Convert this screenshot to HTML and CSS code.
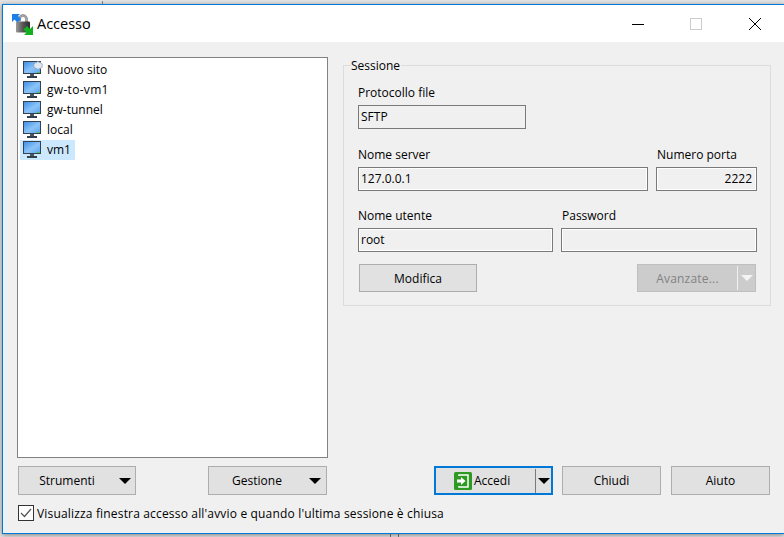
FILE: index.html
```html
<!DOCTYPE html>
<html>
<head>
  <meta charset="utf-8">
  <link rel="stylesheet" href="styles.css">
  <title>Accesso</title>
</head>
<body>
  <svg class="defs" width="0" height="0">
    <defs>
      <linearGradient id="screen" x1="0" y1="0" x2="1" y2="1">
        <stop offset="0" stop-color="#3f8fe8"/>
        <stop offset="0.55" stop-color="#8cc4f8"/>
        <stop offset="1" stop-color="#5aa5ee"/>
      </linearGradient>
      <linearGradient id="lock" x1="0" y1="0" x2="1" y2="0">
        <stop offset="0" stop-color="#9a9a9a"/>
        <stop offset="0.5" stop-color="#555"/>
        <stop offset="1" stop-color="#2c2c2c"/>
      </linearGradient>
      <symbol id="monitor" viewBox="0 0 18 18">
        <rect x="0" y="0" width="18" height="13" fill="#35414d"/>
        <rect x="1" y="1" width="16" height="11" fill="url(#screen)"/>
        <rect x="14" y="11" width="3" height="1" fill="#4fc04f"/>
        <rect x="7" y="13" width="4" height="2" fill="#4a5560"/>
        <rect x="4" y="15" width="10" height="2" fill="#35414d"/>
      </symbol>
    </defs>
  </svg>

  <div class="window">
    <div class="titlebar">
      <svg class="app-icon" width="21" height="21" viewBox="0 0 21 21">
        <path d="M6.500 7V5a4.500 4.500 0 0 1 9 0v3h-2V5a2.500 2.500 0 0 0-5 0v2z" fill="#a8a8a8" stroke="#666" stroke-width="0.500"/>
        <rect x="4" y="7.500" width="14" height="11" rx="1" fill="url(#lock)"/>
        <path d="M0 0h8L6 2l3 3-3.500 3.500-3-3L0 8z" fill="#1a7fe6"/>
        <path d="M21 21h-9l2.500-2.500-3-3 3.500-3.500 3 3 3-3z" fill="#12b01e"/>
      </svg>
      <span class="title">Accesso</span>
      <div class="caption-buttons">
        <svg class="cap" width="12" height="12" viewBox="0 0 12 12"><path d="M0 6.500h12" stroke="#000" fill="none"/></svg>
        <svg class="cap" width="12" height="12" viewBox="0 0 12 12"><rect x="0.500" y="0.500" width="11" height="11" stroke="#ccc" fill="none"/></svg>
        <svg class="cap close-x" width="12" height="12" viewBox="0 0 12 12"><path d="M0 0l12 12M12 0L0 12" stroke="#000" fill="none"/></svg>
      </div>
    </div>

    <div class="content">
      <div class="main">
        <div class="site-list">
          <div class="site">
            <svg class="site-icon new" width="20" height="18" viewBox="0 0 20 18">
              <use href="#monitor" width="18" height="18"/>
              <path d="M15 0l1 1.500 1.500-.5.500 1.500 1.500.5-.5 1.500.5 1.500-1.500.5-.5 1.500-1.500-.5-1 1-1-1-1.500.5-.5-1.500-1.500-.5.500-1.500-.5-1.500 1.500-.5.500-1.500 1.500.5z" fill="#dfe8f2" stroke="#7d96b0" stroke-width="0.600"/>
            </svg>
            <span class="site-name">Nuovo sito</span>
          </div>
          <div class="site"><svg class="site-icon" width="18" height="18"><use href="#monitor"/></svg><span class="site-name wide">gw-to-vm1</span></div>
          <div class="site"><svg class="site-icon" width="18" height="18"><use href="#monitor"/></svg><span class="site-name">gw-tunnel</span></div>
          <div class="site"><svg class="site-icon" width="18" height="18"><use href="#monitor"/></svg><span class="site-name">local</span></div>
          <div class="site selected"><svg class="site-icon" width="18" height="18"><use href="#monitor"/></svg><span class="site-name">vm1</span></div>
        </div>

        <div class="session">
          <span class="legend">Sessione</span>
          <div class="row">
            <div class="field protocol">
              <label>Protocollo file</label>
              <div class="box">SFTP</div>
            </div>
          </div>
          <div class="row server-row">
            <div class="field grow">
              <label>Nome server</label>
              <div class="box editable">127.0.0.1</div>
            </div>
            <div class="field port">
              <label>Numero porta</label>
              <div class="box editable right">2222</div>
            </div>
          </div>
          <div class="row user-row">
            <div class="field user">
              <label>Nome utente</label>
              <div class="box editable">root</div>
            </div>
            <div class="field grow">
              <label class="nudge">Password</label>
              <div class="box editable"></div>
            </div>
          </div>
          <div class="row actions">
            <button class="btn modify">Modifica</button>
            <button class="btn advanced" disabled>
              <span class="btn-label">Avanzate...</span>
              <span class="sep"></span>
              <span class="arrow"></span>
            </button>
          </div>
        </div>
      </div>

      <div class="buttons">
        <button class="btn menu tools"><span class="btn-label">Strumenti</span><span class="arrow"></span></button>
        <button class="btn menu manage"><span class="btn-label">Gestione</span><span class="arrow"></span></button>
        <button class="btn login">
          <svg class="login-icon" width="18" height="18" viewBox="0 0 18 18">
            <rect width="18" height="18" rx="1.500" fill="#2f9a22"/>
            <path d="M5 4V3h9v12H5v-1" fill="none" stroke="#fff" stroke-width="1.500"/>
            <path d="M3 7.500h4V5l4.500 4L7 13v-2.500H3z" fill="#fff"/>
          </svg>
          <span>Accedi</span>
          <span class="sep"></span>
          <span class="arrow"></span>
        </button>
        <button class="btn close">Chiudi</button>
        <button class="btn help">Aiuto</button>
      </div>

      <div class="show-login">
        <svg class="check" width="16" height="16" viewBox="0 0 16 16">
          <rect x="0.500" y="0.500" width="15" height="15" fill="#fff" stroke="#333"/>
          <path d="M3 8l3.500 3.500L13 4" fill="none" stroke="#555" stroke-width="1.200"/>
        </svg>
        <span class="show-text">Visualizza finestra accesso all'avvio e quando l'ultima sessione è chiusa</span>
      </div>
    </div>
  </div>
</body>
</html>
```

FILE: styles.css
```css
* {
  box-sizing: border-box;
}

html, body {
  height: 100%;
}

body {
  margin: 0;
  padding: 4px 0 0 2px;
  overflow: hidden;
  background-color: #e4e4e4;
  background-image:
    linear-gradient(#8c8c8c, #8c8c8c),
    linear-gradient(#777, #777),
    linear-gradient(#777, #777);
  background-size: 1px 3px, 1px 4px, 1px 4px;
  background-position: 102px 1px, 390px 533px, 398px 533px;
  background-repeat: no-repeat;
  font-family: "Open Sans", "Noto Sans", sans-serif;
  font-size: 12px;
  color: #000;
}

.defs {
  position: absolute;
}

.window {
  width: 782px;
  height: 530px;
  display: flex;
  flex-direction: column;
  background: #f0f0f0;
  border: 1px solid #0078d7;
  border-right: 0;
  box-shadow: 0 1px 5px rgba(0, 0, 0, 0.45);
}

.titlebar {
  height: 37px;
  flex: none;
  display: flex;
  align-items: center;
  background: #fff;
  padding-left: 9px;
}

.app-icon {
  margin-top: 1px;
}

.title {
  margin-left: 4px;
  font-size: 14.500px;
}

.caption-buttons {
  margin-left: auto;
  display: flex;
  gap: 46px;
  padding-right: 23px;
}

.close-x {
  margin-left: 1px;
}

.content {
  flex: 1;
  padding: 15px 13px 0 14px;
}

.main {
  display: flex;
  gap: 15px;
  height: 401px;
}

.site-list {
  width: 311px;
  flex: none;
  padding: 2px;
  background: #fff;
  border: 1px solid #828282;
}

.site {
  width: fit-content;
  height: 20px;
  display: flex;
  align-items: center;
  padding: 0 4px 0 3px;
}

.site-name {
  margin-bottom: 2px;
}

.site-name.wide {
  letter-spacing: 0.300px;
}

.site-icon {
  margin-right: 6px;
  flex: none;
}

.site-icon.new {
  margin-right: 4px;
}

.site.selected {
  background: #cce8ff;
}

.session {
  position: relative;
  flex: 1;
  height: 241px;
  margin-top: 8px;
  padding: 19px 13px 13px 14px;
  border: 1px solid #dcdcdc;
}

.legend {
  position: absolute;
  top: -9px;
  left: 7px;
  padding: 0 1px 0 0;
  background: #f0f0f0;
}

.row {
  display: flex;
  gap: 8px;
}

.server-row {
  margin-top: 18px;
}

.user-row {
  margin-top: 17px;
}

.field {
  display: flex;
  flex-direction: column;
}

.field label {
  height: 20px;
  line-height: 15px;
}

.field label.nudge,
.port label {
  padding-left: 1px;
}

.protocol {
  width: 168px;
}

.grow {
  flex: 1;
}

.port {
  width: 101px;
}

.user {
  width: 195px;
}

.box {
  height: 24px;
  line-height: 22px;
  padding: 0 4px 0 2px;
  border: 1px solid #7a7a7a;
  background: #f0f0f0;
}

.box.editable {
  box-shadow: inset 0 0 0 1px #fff;
}

.box.right {
  text-align: right;
}

.actions {
  margin-top: 12px;
  padding-left: 1px;
  justify-content: space-between;
}

.btn {
  height: 28px;
  padding: 0;
  font: inherit;
  color: #000;
  background: #e1e1e1;
  border: 1px solid #adadad;
  display: flex;
  align-items: center;
  justify-content: center;
}

.modify {
  width: 118px;
}

.advanced {
  width: 119px;
  margin-right: 1px;
  color: #838383;
  background: #cccccc;
  border-color: #bfbfbf;
  justify-content: flex-start;
}

.advanced .btn-label {
  width: 99px;
  text-align: center;
  letter-spacing: 0.200px;
}

.sep {
  width: 1px;
  height: 24px;
  background: #7a7a7a;
}

.advanced .sep {
  background: #f0f0f0;
}

.arrow {
  width: 0;
  height: 0;
  border-left: 6px solid transparent;
  border-right: 6px solid transparent;
  border-top: 6px solid #000;
}

.advanced .arrow {
  margin-left: 3px;
  border-top-color: #f4f4f4;
}

.buttons {
  display: flex;
  align-items: center;
  height: 29px;
  margin-top: 8px;
  padding-left: 1px;
}

.buttons .btn {
  height: 29px;
}

.menu {
  justify-content: flex-start;
}

.menu .btn-label {
  width: 96px;
  text-align: center;
}

.menu .arrow {
  margin-left: 4px;
}

.tools {
  width: 118px;
}

.manage {
  width: 119px;
  margin-left: 72px;
}

.buttons .login {
  width: 119px;
  margin-left: 107px;
  border: 2px solid #0078d7;
  justify-content: flex-start;
  padding-left: 18px;
}

.login-icon {
  margin-right: 2px;
  flex: none;
}

.login .sep {
  margin-left: 25px;
}

.login .arrow {
  margin-left: 2px;
}

.close {
  width: 99px;
  margin-left: 9px;
}

.help {
  width: 99px;
  margin-left: 10px;
}

.show-login {
  display: flex;
  align-items: center;
  height: 16px;
  margin-top: 10px;
  padding-left: 1px;
}

.check {
  flex: none;
  margin-right: 3px;
}

.show-text {
  letter-spacing: 0.170px;
}
```
